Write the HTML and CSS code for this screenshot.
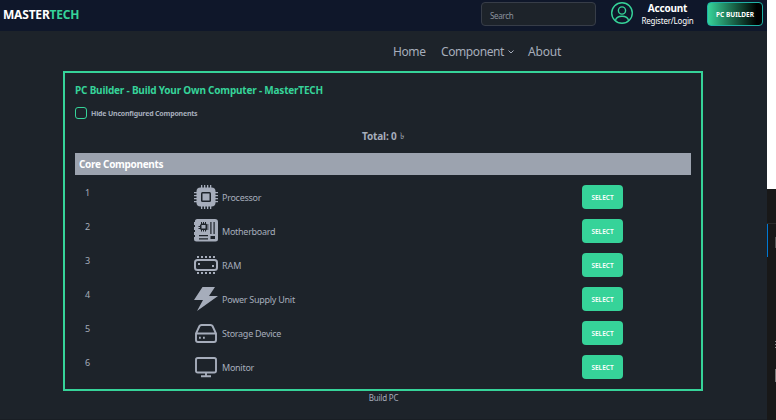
FILE: index.html
```html
<!DOCTYPE html>
<html lang="en">
<head>
<meta charset="utf-8">
<title>MasterTECH</title>
<link rel="stylesheet" href="styles.css">
</head>
<body>
<div class="page">
  <header class="topbar">
    <div class="logo">MASTER<span>TECH</span></div>
    <div class="search">Search</div>
    <svg class="avatar" viewBox="0 0 24 24" fill="none" stroke="currentColor" stroke-width="1.4"><circle cx="12" cy="12" r="10.3"/><circle cx="12" cy="9.500" r="3.600"/><path d="M5.500 19.500c.5-3 2.800-4.300 6.500-4.300s6 1.300 6.500 4.300"/></svg>
    <div class="account"><b>Account</b><span>Register/Login</span></div>
    <div class="builder">PC BUILDER</div>
  </header>
  <nav class="nav">
    <span class="home">Home</span>
    <span class="component">Component</span>
    <svg class="chevron" viewBox="0 0 6 4" fill="none" stroke="currentColor"><path d="M.5.5 3 3 5.500.5"/></svg>
    <span class="about">About</span>
  </nav>
  <main class="card">
    <h1>PC Builder - Build Your Own Computer - MasterTECH</h1>
    <div class="hide"><i class="box"></i><span>Hide Unconfigured Components</span></div>
    <div class="total"><span>Total: 0</span><small>৳</small></div>
    <h2><span>Core Components</span></h2>
    <div class="row"><span class="num">1</span>
      <svg class="icon" viewBox="0 0 24 24" fill="currentColor"><rect x="2.500" y="2.500" width="19" height="19" rx="4"/><path d="M7 0h1.300v4H7zM10 0h1.300v4H10zM13 0h1.300v4H13zM16 0h1.300v4H16zM7 20h1.300v4H7zM10 20h1.300v4H10zM13 20h1.300v4H13zM16 20h1.300v4H16zM0 7h4v1.300H0zM0 10h4v1.300H0zM0 13h4v1.300H0zM0 16h4v1.300H0zM20 7h4v1.300h-4zM20 10h4v1.300h-4zM20 13h4v1.300h-4zM20 16h4v1.300h-4z"/><rect class="cut" x="7" y="7" width="10" height="10" rx="1.500"/><rect x="8.500" y="8.500" width="7" height="7"/></svg>
      <span class="name">Processor</span><span class="select">SELECT</span></div>
    <div class="row"><span class="num">2</span>
      <svg class="icon" viewBox="0 0 24 24" fill="currentColor"><path d="M3 0h18a3 3 0 0 1 3 3v17a2.500 2.500 0 0 1-2.500 2.500h-19A2.500 2.500 0 0 1 0 20v-2h1v-2H0v-3h1v-2H0V8h1V6H0V3h1V1.500Q1.500 0 3 0z"/><g class="cut"><path d="M7 3h1v1.500h1V3h1v1.500h1V3h1v1.500l1 1h1.500v1H13v1h1.500v1H13v1h1.500v1H13l-1 1V12.500h-1v-1.500h-1v1.500H9v-1.500H8v1.500H7v-1.500l-1-1H4.500v-1H6v-1H4.500v-1H6v-1l1-1z"/><path d="M16.300 3h1.200v12h-1.200zM19.500 3h1.200v12h-1.200zM5 16h9v1.200H5zM5 19.300h9v1.200H5zM16.500 17H21v3h-4.500z"/></g><rect x="7.500" y="6" width="4" height="3.500"/></svg>
      <span class="name">Motherboard</span><span class="select">SELECT</span></div>
    <div class="row"><span class="num">3</span>
      <svg class="icon" viewBox="0 0 24 24" fill="currentColor"><rect x="1" y="7" width="22" height="10" rx="2.500" fill="none" stroke="currentColor" stroke-width="2"/><path d="M3 3h2v2H3zM7 3h2v2H7zM11 3h2v2h-2zM15 3h2v2h-2zM19 3h2v2h-2zM3 19h2v2H3zM7 19h2v2H7zM11 19h2v2h-2zM15 19h2v2h-2zM19 19h2v2h-2zM4 10h2v2H4zM18 12h2v2h-2z"/></svg>
      <span class="name ram">RAM</span><span class="select">SELECT</span></div>
    <div class="row"><span class="num">4</span>
      <svg class="icon" viewBox="0 0 24 24" fill="currentColor"><path d="M8.500 0H21l-6 9h9L3 24l6-11H0z"/></svg>
      <span class="name">Power Supply Unit</span><span class="select">SELECT</span></div>
    <div class="row"><span class="num">5</span>
      <svg class="icon" viewBox="0 0 24 24" fill="none" stroke="currentColor" stroke-width="1.900"><path d="M2 12.500v6.500a2 2 0 0 0 2 2h16a2 2 0 0 0 2-2v-6.500L18.500 5q-.5-1-2-1h-9q-1.500 0-2 1zM2 12.500h20"/><path d="M5 16.800h1.800M9 16.800h1.800"/></svg>
      <span class="name">Storage Device</span><span class="select">SELECT</span></div>
    <div class="row"><span class="num">6</span>
      <svg class="icon" viewBox="0 0 24 24" fill="none" stroke="currentColor" stroke-width="1.900"><rect x="2" y="3" width="20" height="14.500" rx="1.800"/><path d="M12 17.500V21M7 21.200h10"/></svg>
      <span class="name">Monitor</span><span class="select">SELECT</span></div>
  </main>
  <footer>Build PC</footer>
</div>
<aside class="strip">
  <div class="blank"></div><div class="panel"></div><div class="active"><i></i></div><div class="lines"><i></i><i></i><i></i></div><div class="thumb"></div>
</aside>
</body>
</html>
```
FILE: styles.css
```css
* { box-sizing: border-box; }
body { margin: 0; width: 776px; height: 420px; display: flex; overflow: hidden; background: #1d232a; color: #a6adbb; font-family: "Noto Sans", "Open Sans", sans-serif; white-space: nowrap; }
.page { width: 767px; height: 420px; border-bottom: 1px solid #191e24; }
.topbar { height: 31px; background: #0f172a; display: flex; align-items: flex-start; color: #fff; }
.logo { width: 478px; margin-left: 3px; line-height: 29px; font-size: 12px; font-weight: 700; letter-spacing: -.2px; }
.logo span { color: #36d399; }
.search { width: 115px; height: 24px; margin-top: 2px; padding-left: 8px; border: 1px solid #373d48; border-radius: 4px; background: #1d232a; color: #8b929e; font-size: 8px; line-height: 25px; letter-spacing: -.35px; }
.avatar { width: 24px; height: 24px; margin: 1px 0 0 14px; color: #36d399; }
.account { width: 57px; margin-left: 5px; display: flex; flex-direction: column; align-items: center; font-size: 8px; line-height: 12px; padding-top: 2px; }
.account b { font-size: 10px; letter-spacing: -.2px; }
.account span { margin-top: 1px; letter-spacing: -.2px; }
.builder { width: 56px; height: 24px; margin: 2px 0 0 11px; border: 1px solid #1fb2a6; border-radius: 4px; background: linear-gradient(90deg, #36d399, #000 90%); text-align: center; font-size: 6.500px; font-weight: 700; line-height: 24px; letter-spacing: 0; }
.nav { height: 40px; display: flex; align-items: center; padding: 1px 0 0 393px; font-size: 12px; }
.home { width: 48px; letter-spacing: -.4px; }
.component { width: 67px; letter-spacing: -.4px; }
.chevron { width: 6px; height: 4px; margin-right: 14px; }
.about { letter-spacing: -.2px; }
.card { width: 640px; height: 320px; margin-left: 63px; border: 2px solid #36d399; padding: 10px 10px 0; }
h1 { margin: 0; color: #36d399; font-size: 10px; line-height: 14px; font-weight: 700; letter-spacing: -.2px; }
.hide { display: flex; align-items: center; height: 12px; margin-top: 10px; font-size: 7px; font-weight: 700; letter-spacing: -.19px; }
.box { width: 12px; height: 12px; margin-right: 4px; border: 1px solid #36d399; border-radius: 3px; }
.total { height: 14px; margin-top: 10px; padding-left: 287px; display: flex; align-items: center; font-size: 10px; font-weight: 700; letter-spacing: -.15px; gap: 3px; }
.total small { font-size: 9px; font-weight: 400; }
h2 { margin: 10px 0 5px; height: 22px; padding-left: 4px; background: #9ca3af; color: #fff; font-size: 10px; line-height: 22px; letter-spacing: -.3px; }
.row { height: 34px; display: flex; align-items: center; font-size: 9px; }
.num { width: 109px; padding-left: 10px; margin: -10px 10px 0 0; }
.icon { width: 24px; height: 24px; flex: none; margin-right: 4px; }
.cut { fill: #1d232a; }
.name { width: 360px; letter-spacing: -.27px; }
.ram { letter-spacing: 0; }
.select { width: 41px; height: 24px; border-radius: 4px; background: #36d399; color: #fff; text-align: center; line-height: 25px; font-size: 6.500px; font-weight: 600; }
footer { width: 767px; text-align: center; font-size: 8px; line-height: 13px; letter-spacing: -.2px; }
.strip { width: 9px; background: #181818; }
.blank { height: 189px; background: #fff; }
.panel { height: 35px; border-bottom: 1px solid #2b2b2b; }
.active { height: 33px; border-left: 1px solid #0078d4; display: flex; justify-content: flex-end; align-items: center; }
.active i { width: 1px; height: 11px; background: #555; margin-top: 3px; }
.lines { height: 112px; padding-top: 84px; display: flex; flex-direction: column; align-items: flex-end; gap: 2px; }
.lines i { width: 1px; height: 1px; background: #888; }
.thumb { width: 1px; height: 13px; margin-left: auto; background: #777; }
```
